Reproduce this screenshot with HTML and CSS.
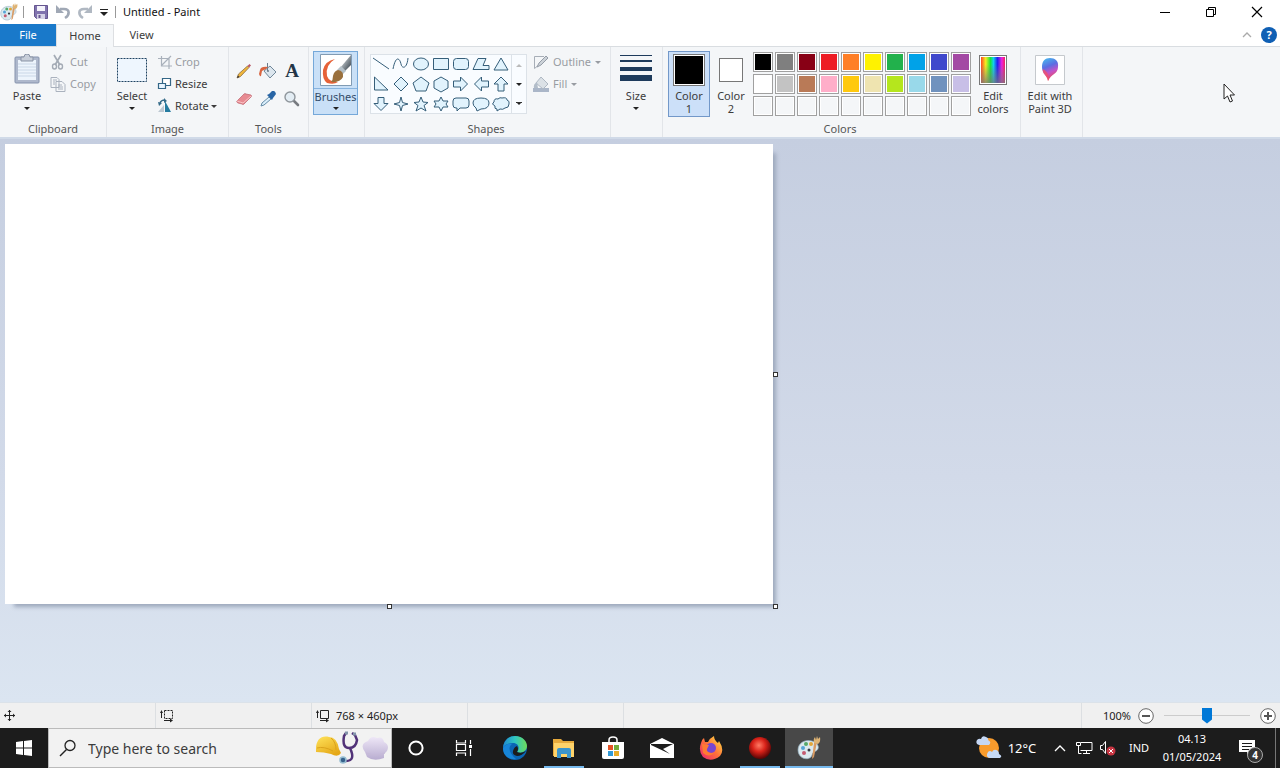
FILE: index.html
```html
<!DOCTYPE html>
<html lang="en">
<head>
<meta charset="utf-8">
<title>Untitled - Paint</title>
<link rel="stylesheet" href="styles.css">
</head>
<body>
<div class="desktop">
<header class="titlebar">
  <svg class="app-icon" width="18" height="18" viewBox="0 0 24 24"><use href="#palette"/></svg>
  <span class="rule"></span>
  <button class="quick save" aria-label="Save"><svg width="14" height="14" viewBox="0 0 14 14"><path d="M0.5 0.5h13v13h-11l-2-2z" fill="#8073ae" stroke="#65558f"/><path d="M3 1h8v5H3z" fill="#f4f3fb"/><path d="M3 9h8v5H3z" fill="#d5d2e6"/><path d="M4.500 10h2v3h-2z" fill="#65558f"/></svg></button>
  <button class="quick" aria-label="Undo"><svg width="16" height="16" viewBox="0 0 16 16"><path d="M5 5h4c6 0 6 6 1 9" fill="none" stroke="#a0a8b5" stroke-width="2.600"/><path d="M1 1v8h8z" fill="#a0a8b5"/></svg></button>
  <button class="quick" aria-label="Redo"><svg width="16" height="16" viewBox="0 0 16 16"><path d="M11 5H7C1 5 1 11 6 14" fill="none" stroke="#b0b8c2" stroke-width="2.600"/><path d="M15 1v8H7z" fill="#b0b8c2"/></svg></button>
  <button class="quick more" aria-label="Customize toolbar"><svg width="8" height="7" viewBox="0 0 8 7"><path d="M0 0h8v1H0zM0 3h8L4 7z" fill="#222"/></svg></button>
  <span class="rule"></span>
  <h1 class="title">Untitled - Paint</h1>
  <div class="window-buttons">
    <button aria-label="Minimize"><svg width="12" height="12" viewBox="0 0 12 12"><path d="M1 6.500h10" stroke="#000"/></svg></button>
    <button aria-label="Restore"><svg width="12" height="12" viewBox="0 0 12 12"><path d="M1.500 3.500h7v7h-7zM3.500 3.500v-2h7v7h-2" stroke="#000" fill="none"/></svg></button>
    <button aria-label="Close"><svg width="12" height="12" viewBox="0 0 12 12"><path d="M1 1l10 10M11 1L1 11" stroke="#000" stroke-width="1.200"/></svg></button>
  </div>
</header>
<nav class="tabs">
  <button class="tab file">File</button><button class="tab home">Home</button><button class="tab view">View</button>
  <div class="tab-end">
    <button class="plain" aria-label="Collapse ribbon"><svg width="10" height="6" viewBox="0 0 10 6"><path d="M1 5l4-4 4 4" fill="none" stroke="#aaa" stroke-width="1.300"/></svg></button>
    <button class="help" aria-label="Help">?</button>
  </div>
</nav>
<main class="ribbon">
  <section class="group clipboard">
    <div class="tools-row">
      <button class="big paste"><svg width="28" height="32" viewBox="0 0 28 32"><rect x="2" y="3" width="24" height="26" rx="1" fill="#aeb8cc" stroke="#8693ad"/><rect x="5" y="6" width="18" height="20" fill="#edf4fc"/><path d="M5 10h18M5 13h18M5 16h18M5 19h18M5 22h18" stroke="#cad7e7"/><path d="M8 3h3q0-3 3-3t3 3h3v4H8z" fill="#c7ced9" stroke="#8993a5"/></svg><span>Paste</span><i class="down"></i></button>
      <div class="stack">
        <button class="small off"><svg width="16" height="16" viewBox="0 0 16 16"><path d="M4 1l6 10M11 1L5 11" stroke="#a4abb5" stroke-width="1.700"/><ellipse cx="4.500" cy="12.500" rx="2" ry="2.500" fill="none" stroke="#a4abb5" stroke-width="1.400"/><ellipse cx="10.500" cy="12.500" rx="2" ry="2.500" fill="none" stroke="#a4abb5" stroke-width="1.400"/></svg>Cut</button>
        <button class="small off"><svg width="16" height="16" viewBox="0 0 16 16"><path d="M1 1.500h6l2 2v8H1zM6 5.500h6l3 3v7H6z" fill="#f4f6f8" stroke="#aab2be"/><path d="M3 4h4M3 6h2M3 8h2M8 9h4M8 11h5M8 13h5" stroke="#aab2be"/></svg>Copy</button>
      </div>
    </div>
    <h2>Clipboard</h2>
  </section>
  <section class="group image">
    <div class="tools-row">
      <button class="big select"><svg width="32" height="32" viewBox="0 0 32 32"><rect x="1.500" y="4.500" width="29" height="23" fill="#eef6fe" stroke="#1e4261" stroke-dasharray="2 1"/></svg><span>Select</span><i class="down"></i></button>
      <div class="stack">
        <button class="small off"><svg width="16" height="16" viewBox="0 0 16 16"><path d="M4.500 2v10H15M1 4.500h11V15M14 2L5 11" fill="none" stroke="#a9b1bb" stroke-width="1.200"/></svg>Crop</button>
        <button class="small"><svg width="16" height="16" viewBox="0 0 16 16"><path d="M5.500 2.500h8v7h-8z" fill="#fff" stroke="#346787" stroke-width="1.200"/><path d="M1.500 7.500h7v5h-7z" fill="#e8f5ff" stroke="#346787" stroke-width="1.200"/></svg>Resize</button>
        <button class="small"><svg width="16" height="16" viewBox="0 0 16 16"><path d="M8 3v11h6z" fill="#257ba0"/><path d="M7 7v7H1z" fill="#bdc8d2"/><path d="M3 5q1-3 5-3" fill="none" stroke="#356b89" stroke-width="1.500"/><path d="M7 0l3 3-3 2zM1 4l4 1-3 3z" fill="#356b89"/></svg>Rotate<i class="down"></i></button>
      </div>
    </div>
    <h2>Image</h2>
  </section>
  <section class="group tools">
    <div class="tool-grid">
      <button aria-label="Pencil"><svg width="16" height="16" viewBox="0 0 16 16"><path d="M1 15l1.500-4 9-8 1.500 1.500-8.500 9z" fill="#f0b63b" stroke="#8a6c42" stroke-width=".8"/><path d="M11.500 3l2-2L15 2.500l-2 2z" fill="#b85764"/><path d="M1 15l1-2.500 1.500 1.500z" fill="#343434"/></svg></button>
      <button aria-label="Fill with color"><svg width="18" height="16" viewBox="0 0 18 16"><path d="M5 8l6-5 6 6-6 6z" fill="#dce6ee" stroke="#71889a"/><path d="M8.500 0v8" stroke="#6b7c8b"/><path d="M9 4Q2 3 1 7l-1 4q1 3 2 2l1-5 4-2z" fill="#d96540"/><circle cx="9" cy="8" r="1" fill="#6b7c8b"/></svg></button>
      <button class="letter" aria-label="Text">A</button>
      <button aria-label="Eraser"><svg width="16" height="16" viewBox="0 0 16 16"><path d="M1 10l7-7q1-1 2 0l5 1q1 1 0 2l-7 7q-1 1-2 0l-4-1q-2-1-1-2z" fill="#e78b92" stroke="#bd626d" stroke-width=".7"/><path d="M1 10l6 2 8-7" fill="none" stroke="#fac1c4"/></svg></button>
      <button aria-label="Color picker"><svg width="16" height="16" viewBox="0 0 16 16"><path d="M1 15l1-3 7-6 2 2-7 6z" fill="#d9eefb" stroke="#668da8"/><path d="M7 4l2-1 3-3q3-1 4 3l-3 4-1 2z" fill="#2865a5"/></svg></button>
      <button aria-label="Magnifier"><svg width="16" height="16" viewBox="0 0 16 16"><path d="M9 9l5 5" stroke="#777b80" stroke-width="2.600" stroke-linecap="round"/><circle cx="6" cy="6" r="5" fill="#e3edf4" stroke="#8f969c" stroke-width="1.400"/></svg></button>
    </div>
    <h2>Tools</h2>
  </section>
  <section class="group brush-group">
    <button class="brush"><svg width="32" height="32" viewBox="0 0 32 32"><defs><linearGradient id="handle" x1="0" y1="0" x2="1" y2="1"><stop stop-color="#f4f4f4"/><stop offset=".45" stop-color="#9aa2a8"/><stop offset="1" stop-color="#25313b"/></linearGradient></defs><path d="M.5.5h31v31H.5z" fill="#fff" stroke="#819bb3"/><path d="M15 5Q5 7 3 16q-1 9 4 13 7 2 11-1-9 0-11-6Q5 11 15 5z" fill="#e66238"/><path d="M31 1L20 14l4 4 7-7z" fill="url(#handle)"/><path d="M21 12l5 5-4 4-5-5z" fill="#b4c0c8"/><path d="M18 16q6 1 5 7-3 6-12 5 2-2 2-6 1-5 5-6z" fill="#9a703d"/></svg><span>Brushes</span><i class="down"></i></button>
  </section>
  <section class="group shapes">
    <div class="tools-row">
      <div class="gallery">
        <div class="shape-grid">
          <button aria-label="Line"><svg viewBox="0 0 20 20"><path d="M2 4l16 11"/></svg></button><button aria-label="Curve"><svg viewBox="0 0 20 20"><path d="M2 15C5 0 9 5 10 10s6 5 7-6"/></svg></button><button aria-label="Oval"><svg viewBox="0 0 20 20"><ellipse cx="10" cy="10" rx="7.500" ry="6"/></svg></button><button aria-label="Rectangle"><svg viewBox="0 0 20 20"><path d="M2.500 4.500h15v11h-15z"/></svg></button><button aria-label="Rounded rectangle"><svg viewBox="0 0 20 20"><rect x="2.500" y="4.500" width="15" height="11" rx="3"/></svg></button><button aria-label="Polygon"><svg viewBox="0 0 20 20"><path d="M7 4.500h8l-3 7h6v4H2z"/></svg></button><button aria-label="Triangle"><svg viewBox="0 0 20 20"><path d="M10 4l7 12H3z"/></svg></button>
          <button aria-label="Right triangle"><svg viewBox="0 0 20 20"><path d="M3.500 3v13H17z"/></svg></button><button aria-label="Diamond"><svg viewBox="0 0 20 20"><path d="M10 3l7 7-7 7-7-7z"/></svg></button><button aria-label="Pentagon"><svg viewBox="0 0 20 20"><path d="M10 3l8 6-3 8H5L2 9z"/></svg></button><button aria-label="Hexagon"><svg viewBox="0 0 20 20"><path d="M10 3l7 4v7l-7 4-7-4V7z"/></svg></button><button aria-label="Right arrow"><svg viewBox="0 0 20 20"><path d="M2.500 7h7V3l7 7-7 7v-4h-7z"/></svg></button><button aria-label="Left arrow"><svg viewBox="0 0 20 20"><path d="M17.500 7h-7V3l-7 7 7 7v-4h7z"/></svg></button><button aria-label="Up arrow"><svg viewBox="0 0 20 20"><path d="M7 17v-7H3l7-7 7 7h-4v7z"/></svg></button>
          <button aria-label="Down arrow"><svg viewBox="0 0 20 20"><path d="M7 3.500v6H3l7 7 7-7h-4v-6z"/></svg></button><button aria-label="Four-point star"><svg viewBox="0 0 20 20"><path d="M10 3l1.500 5.500L17 10l-5.500 1.500L10 17l-1.500-5.500L3 10l5.500-1.500z"/></svg></button><button aria-label="Five-point star"><svg viewBox="0 0 20 20"><path d="M10 3l2 5 5 .5-4 3 2 5.500-5-3-5 3 2-5.500-4-3L8 8z"/></svg></button><button aria-label="Six-point star"><svg viewBox="0 0 20 20"><path d="M10 3l2 4h5l-2 3 2 3h-5l-2 4-2-4H3l2-3-2-3h5z"/></svg></button><button aria-label="Rounded callout"><svg viewBox="0 0 20 20"><path d="M5 4h10q3 0 3 3v4q0 3-3 3H9l-3 3v-3H5q-3 0-3-3V7q0-3 3-3z"/></svg></button><button aria-label="Oval callout"><svg viewBox="0 0 20 20"><path d="M5 14Q2 12 2 9q0-5 8-5t8 5q0 6-8 6l-4 2z"/></svg></button><button aria-label="Cloud callout"><svg viewBox="0 0 20 20"><path d="M6 15q-3 0-2-3-4-2-1-4 0-4 4-3 2-2 4-1 5-1 5 2 3 1 2 4 0 4-4 4-2 2-5 1l-3 2z"/></svg></button>
        </div>
        <div class="gallery-scroll"><button aria-label="Scroll up"><i class="up"></i></button><button aria-label="Scroll down"><i class="down"></i></button><button aria-label="More shapes"><i class="down lined"></i></button></div>
      </div>
      <div class="stack">
        <button class="small off"><svg width="16" height="16" viewBox="0 0 16 16"><path d="M11 2.500H1.500v12l5-4" fill="none" stroke="#a7aeb7"/><path d="M4 13l2-4 7-7 2 2-7 7z" fill="#ccd2d8" stroke="#959da8"/></svg>Outline<i class="down"></i></button>
        <button class="small off"><svg width="16" height="16" viewBox="0 0 16 16"><path d="M0 12h16v4H0z" fill="#aab6c8"/><path d="M3 7l5-6 7 7-5 5z" fill="#dbe1e6" stroke="#aeb8c3"/><path d="M4 6Q0 8 1 12h4z" fill="#b2bdc9"/></svg>Fill<i class="down"></i></button>
      </div>
    </div>
    <h2>Shapes</h2>
  </section>
  <section class="group size">
    <button class="big"><svg width="32" height="32" viewBox="0 0 32 32"><path d="M0 1h32v1H0zM0 6h32v2H0zM0 13h32v4H0zM0 21h32v6H0z" fill="#1e3b5c"/></svg><span>Size</span><i class="down"></i></button>
  </section>
  <section class="group colors">
    <div class="tools-row">
      <button class="color-choice active"><b class="chip black"></b><span>Color<br>1</span></button>
      <button class="color-choice"><b class="chip white"></b><span>Color<br>2</span></button>
      <div class="palette">
        <button class="c01" aria-label="Black"></button><button class="c02" aria-label="Gray"></button><button class="c03" aria-label="Dark red"></button><button class="c04" aria-label="Red"></button><button class="c05" aria-label="Orange"></button><button class="c06" aria-label="Yellow"></button><button class="c07" aria-label="Green"></button><button class="c08" aria-label="Turquoise"></button><button class="c09" aria-label="Indigo"></button><button class="c10" aria-label="Purple"></button>
        <button class="c11" aria-label="White"></button><button class="c12" aria-label="Light gray"></button><button class="c13" aria-label="Brown"></button><button class="c14" aria-label="Rose"></button><button class="c15" aria-label="Gold"></button><button class="c16" aria-label="Light yellow"></button><button class="c17" aria-label="Lime"></button><button class="c18" aria-label="Light turquoise"></button><button class="c19" aria-label="Blue-gray"></button><button class="c20" aria-label="Lavender"></button>
        <button aria-label="Custom 1"></button><button aria-label="Custom 2"></button><button aria-label="Custom 3"></button><button aria-label="Custom 4"></button><button aria-label="Custom 5"></button><button aria-label="Custom 6"></button><button aria-label="Custom 7"></button><button aria-label="Custom 8"></button><button aria-label="Custom 9"></button><button aria-label="Custom 10"></button>
      </div>
      <button class="picture-button"><b class="spectrum"></b><span>Edit<br>colors</span></button>
    </div>
    <h2>Colors</h2>
  </section>
  <section class="group three-d">
    <button class="picture-button"><svg width="30" height="30" viewBox="0 0 30 30"><defs><linearGradient id="drop" x1=".2" y1="0" x2=".5" y2="1"><stop stop-color="#48b8ee"/><stop offset=".38" stop-color="#5b6de2"/><stop offset=".65" stop-color="#c453c8"/><stop offset="1" stop-color="#ef4b42"/></linearGradient></defs><path d="M.5.5h29v29H.5z" fill="#fff" stroke="#c5c9cd"/><path d="M15 3c5 0 9 3 8 9 0 7-7 7-10 14 0-5-6-7-6-14 0-6 3-9 8-9z" fill="url(#drop)"/><path d="M8 14q5 2 6 10l-1 2q-1-4-3-6-3-3-2-6z" fill="#f0506b" opacity=".8"/></svg><span>Edit with<br>Paint 3D</span></button>
  </section>
</main>
<div class="workspace">
  <div class="canvas"><i class="handle east"></i><i class="handle south"></i><i class="handle corner"></i></div>
</div>
<footer class="status">
  <div class="cell"><svg width="12" height="12" viewBox="0 0 12 12"><path d="M5.500 0v11M0 5.500h11" fill="none" stroke="#222"/><path d="M3.500 2h4l-2-2zM3.500 9h4l-2 2zM2 3.500v4l-2-2zM9 3.500v4l2-2z" fill="#222"/></svg></div>
  <div class="cell"><svg width="14" height="14" viewBox="0 0 14 14"><path d="M4.500 1.500h8v8h-8z" fill="none" stroke="#222" stroke-dasharray="2 1"/><path d="M1.500 9V2M4 11.500h8" fill="none" stroke="#222"/><path d="M0 4h3L1.500 1zM10 9.500v4l3-2z" fill="#222"/></svg></div>
  <div class="cell"><svg width="14" height="14" viewBox="0 0 14 14"><path d="M4.500 1.500h8v8h-8z" fill="none" stroke="#222"/><path d="M1.500 9V2M4 11.500h8" fill="none" stroke="#222"/><path d="M0 4h3L1.500 1zM10 9.500v4l3-2z" fill="#222"/></svg><span>768 × 460px</span></div>
  <div class="cell"></div><div class="cell wide"></div>
  <div class="zoom"><label for="zoom">100%</label><button aria-label="Zoom out"><svg width="16" height="16" viewBox="0 0 16 16"><circle cx="8" cy="8" r="7.300" fill="#fff" stroke="#666"/><path d="M4 8h8" stroke="#555" stroke-width="2"/></svg></button><input id="zoom" type="range" min="0" max="100" value="50"><button aria-label="Zoom in"><svg width="16" height="16" viewBox="0 0 16 16"><circle cx="8" cy="8" r="7.300" fill="#fff" stroke="#666"/><path d="M4 8h8M8 4v8" stroke="#555" stroke-width="2"/></svg></button></div>
</footer>
<footer class="taskbar">
  <button class="task start" aria-label="Start"><svg width="16" height="16" viewBox="0 0 16 16"><path d="M0 2l7-1v6.500H0zM8 .900L16 0v7.500H8zM0 8.500h7V15l-7-1zM8 8.500h8V16l-8-1z" fill="#fff"/></svg></button>
  <div class="search">
    <svg width="18" height="18" viewBox="0 0 18 18"><circle cx="11" cy="6.500" r="5" fill="none" stroke="#222" stroke-width="1.300"/><path d="M7.500 10.500L1 17" stroke="#222" stroke-width="1.400"/></svg>
    <input type="text" aria-label="Search" placeholder="Type here to search">
    <svg width="74" height="34" viewBox="0 0 74 34"><defs><linearGradient id="hat" x1="0" y1="0" x2=".6" y2="1"><stop stop-color="#ffe35b"/><stop offset="1" stop-color="#e5a817"/></linearGradient><linearGradient id="chef" x1="0" y1="0" x2="0" y2="1"><stop stop-color="#eee7f7"/><stop offset="1" stop-color="#b8acd0"/></linearGradient></defs><path d="M1 18C1 8 7 4 14 6q8 0 10 12l2 4q-3 5-10 1-7-2-15-2z" fill="url(#hat)"/><path d="M2 17q7-2 16 3M16 7q5 4 5 12" fill="none" stroke="#dba31c"/><path d="M31 2l-2 3q-2 12 5 12t8-8l-2-5-3-2M35 17q6 13-4 13h-2" fill="none" stroke="#513278" stroke-width="2.500"/><path d="M30 2h3M38 3h3" stroke="#8294a9" stroke-width="3"/><circle cx="28" cy="29" r="3" fill="#36618b" stroke="#96bdd1" stroke-width="1.500"/><path d="M50 21q-6-8 3-11 3-6 9-3 6-2 7 4 6 3 3 9l-3 3v4q-10 4-17-1z" fill="url(#chef)"/><path d="M51 22q9 4 19 0" fill="none" stroke="#c6bad8"/></svg>
  </div>
  <button class="task" aria-label="Cortana"><svg width="18" height="18" viewBox="0 0 18 18"><circle cx="9" cy="9" r="6.600" fill="none" stroke="#fff" stroke-width="2"/></svg></button>
  <button class="task" aria-label="Task view"><svg width="18" height="16" viewBox="0 0 18 16"><path d="M1.500 0v3h9V0M1.500 16v-3h9v3M1.500 4.500h9v6h-9zM15.500 0v4M15.500 9v7" fill="none" stroke="#fff" stroke-width="1.200"/><path d="M14 5h3v3h-3z" fill="#fff"/></svg></button>
  <div class="apps">
    <button class="task" aria-label="Edge"><svg width="24" height="24" viewBox="0 0 24 24"><defs><linearGradient id="edge" x1="0" y1=".3" x2="1" y2=".3"><stop stop-color="#2089d0"/><stop offset=".5" stop-color="#30c7c1"/><stop offset="1" stop-color="#6edb59"/></linearGradient></defs><circle cx="12" cy="12" r="12" fill="#0b65b4"/><path d="M0 12C1 4 6 0 12 0c8 0 12 6 12 10 0 6-7 8-10 6 3-3 2-9-4-9C5 7 1 9 0 12z" fill="url(#edge)"/><path d="M0 12c2-3 5-5 9-4-5 4-2 10 4 15C5 24 0 19 0 12z" fill="#1785d8"/><path d="M14 10q2 3 0 6 4 2 9-1-4 5-9 5-5-1-4-5 1-4 4-5z" fill="#1c1c1c"/></svg></button>
    <button class="task running" aria-label="File Explorer"><svg width="24" height="22" viewBox="0 0 24 22"><path d="M1 2h8l2 2h11v15H1z" fill="#e7aa3c"/><path d="M2 6h20v14H2z" fill="#ffd36a"/><path d="M5 21v-8q0-2 2-2h10q2 0 2 2v8h-4v-4H9v4z" fill="#3c95cc"/></svg></button>
    <button class="task" aria-label="Store"><svg width="24" height="24" viewBox="0 0 24 24"><path d="M8 6V4q0-3 4-3t4 3v2" fill="none" stroke="#fff" stroke-width="1.500"/><path d="M1 6h22v15q0 2-2 2H3q-2 0-2-2z" fill="#fff"/><path d="M7 9h5v5H7z" fill="#e45326"/><path d="M13 9h5v5h-5z" fill="#74ad3c"/><path d="M7 15h5v5H7z" fill="#329ad6"/><path d="M13 15h5v5h-5z" fill="#e9ac27"/></svg></button>
    <button class="task" aria-label="Mail"><svg width="24" height="20" viewBox="0 0 24 20"><path d="M0 6l12-6 12 6v14H0z" fill="#fff"/><path d="M1 6h22L13 11l7 5L1 7z" fill="#1c1c1c"/></svg></button>
    <button class="task" aria-label="Firefox"><svg width="24" height="24" viewBox="0 0 24 24"><defs><linearGradient id="fox" x1="1" y1="0" x2="0" y2="1"><stop stop-color="#ffea42"/><stop offset=".5" stop-color="#ff713b"/><stop offset="1" stop-color="#e92073"/></linearGradient></defs><path d="M2 7q1-4 3-5l1 4h3q2-4 6-6 0 4 4 7l1-2q6 9 1 15-9 7-17 1-5-6-2-14z" fill="url(#fox)"/><circle cx="12" cy="12" r="5" fill="#7846d1"/><path d="M3 8q4 1 7 1l-1 2q-4 6 6 6-5 5-11 0z" fill="#ff7b32"/></svg></button>
    <button class="task running" aria-label="Recorder"><svg width="24" height="24" viewBox="0 0 24 24"><defs><radialGradient id="ball" cx=".45" cy=".38" r=".6"><stop stop-color="#ff7a64"/><stop offset=".5" stop-color="#d92219"/><stop offset="1" stop-color="#5d0505"/></radialGradient></defs><circle cx="12" cy="12" r="11" fill="url(#ball)"/></svg></button>
    <button class="task running current" aria-label="Paint"><svg width="24" height="24" viewBox="0 0 24 24"><g id="palette"><path d="M1 14C1 7 8 3 15 5c7 2 8 8 4 10-4 1-3 3-5 6-4 4-13 1-13-7z" fill="#dbe9ef" stroke="#91adbd" stroke-width=".7"/><circle cx="6" cy="12" r="2" fill="#55a4d7"/><circle cx="9" cy="8" r="2" fill="#54a96b"/><circle cx="14" cy="8" r="2" fill="#e2a63a"/><circle cx="7" cy="17" r="2" fill="#c45b71"/><circle cx="12" cy="14" r="1.500" fill="#343b43"/><path d="M20 6l-3 15-2 2 2-16z" fill="#d89b65"/><path d="M17 7q-1-4 1-6l1 3 1-4 1 3 2-2q1 5-2 7z" fill="#dfb475"/></g></svg></button>
  </div>
  <div class="tray">
    <button class="weather"><svg width="26" height="26" viewBox="0 0 26 26"><circle cx="13" cy="13" r="10" fill="#f89b2c"/><path d="M3 10q-4-1-2-5 2-2 4-1 1-4 5-2 3 1 2 3 4 2 1 5z" fill="#c5d7f4"/><path d="M14 23q-5-1-2-6 2-2 4 0 2-4 6-1 1 1 1 3 4 2 1 4z" fill="#c5d9f6"/></svg><span>12°C</span></button>
    <button class="hidden-icons" aria-label="Show hidden icons"><svg width="12" height="8" viewBox="0 0 12 8"><path d="M1 7l5-5 5 5" fill="none" stroke="#fff" stroke-width="1.300"/></svg></button>
    <button aria-label="Network"><svg width="17" height="16" viewBox="0 0 17 16"><path d="M5 2.500h11v8H4.500M10.500 11v2.500M7 13.500h7M.5 2.500h4v3h-4zM2.500 6v7.500h3" fill="none" stroke="#fff"/></svg></button>
    <button aria-label="Muted"><svg width="18" height="16" viewBox="0 0 18 16"><path d="M1.500 5.500h2l3-4v12l-3-4h-2z" fill="none" stroke="#fff"/><circle cx="12" cy="11" r="4.500" fill="#c73542"/><path d="M10 9l4 4M14 9l-4 4" stroke="#fff"/></svg></button>
    <button class="language">IND</button>
    <button class="clock"><span>04.13</span><span>01/05/2024</span></button>
    <button class="notes" aria-label="4 notifications"><svg width="18" height="16" viewBox="0 0 18 16"><path d="M0 0h16v12h-5l-3 3v-3H0z" fill="#fff"/><path d="M3 3.500h10M3 6.500h10M3 9.500h7" stroke="#1c1c1c"/></svg><b>4</b></button>
    <span class="show-desktop"></span>
  </div>
</footer>
<svg class="pointer" width="13" height="20" viewBox="0 0 13 20"><path d="M1 1v15l3.500-3 2.500 6 2.500-1-2.500-6h4.500z" fill="#fff" stroke="#222"/></svg>
</div>
</body>
</html>
```
FILE: styles.css
```css
* { box-sizing: border-box; }
body { margin: 0; font: 11px/14px "Noto Sans", "Open Sans", sans-serif; color: #3c3c3c; }
button { font: inherit; color: inherit; padding: 0; border: 0; background: none; display: flex; align-items: center; justify-content: center; }
svg { flex: none; display: block; }
h1, h2 { margin: 0; font: inherit; }
.desktop { position: relative; min-height: 100vh; display: flex; flex-direction: column; overflow: hidden; }

.titlebar { height: 24px; display: flex; align-items: center; background: #fff; }
.app-icon { margin-right: 5px; }
.rule { width: 1px; height: 12px; background: #999; }
.quick { width: 22px; height: 22px; }
.save { margin-left: 6px; }
.more { width: 16px; margin-right: 3px; }
.title { color: #111; margin-left: 7px; }
.window-buttons { margin-left: auto; display: flex; height: 22px; }
.window-buttons button { width: 46px; }

.tabs { height: 23px; display: flex; background: #fff; border-bottom: 1px solid #d9dde1; }
.tab { height: 22px; }
.file { width: 56px; background: #1979ca; color: #fff; }
.home { width: 58px; height: 23px; background: #f5f7f9; border: 1px solid #dddfe2; border-bottom: 0; }
.view { width: 55px; }
.tab-end { margin-left: auto; display: flex; align-items: center; gap: 9px; padding-right: 3px; }
.help { width: 16px; height: 16px; border-radius: 50%; background: #0f5fb4; color: #fff; font-weight: bold; }

.ribbon { height: 92px; display: flex; background: #f4f6f8; border-bottom: 2px solid #d0dae8; }
.group { flex: none; display: flex; flex-direction: column; align-items: flex-start; padding-top: 4px; border-right: 1px solid #e2e5e9; }
.group h2 { margin-top: auto; width: 100%; line-height: 17px; text-align: center; color: #555; }
.tools-row, .gallery { display: flex; align-items: flex-start; }
.clipboard { width: 107px; }
.image { width: 122px; }
.tools { width: 80px; }
.brush-group { width: 56px; padding-left: 4px; }
.shapes { width: 246px; padding-left: 5px; }
.shapes h2, .colors h2 { padding-right: 8px; }
.size { width: 52px; padding-left: 3px; }
.colors { width: 358px; padding-left: 5px; }
.three-d { width: 62px; padding-left: 3px; }
.big { flex-direction: column; width: 44px; padding-top: 3px; }
.paste { margin: 0 5px; }
.select { margin: 0 3px; }
.big span { margin-top: 3px; line-height: 14px; }
.big .down { margin-top: 4px; }
.down { width: 0; height: 0; border: 3px solid transparent; border-top-color: currentColor; border-bottom: 0; }
.big .down, .gallery .down { color: #222; }
.up { width: 0; height: 0; border: 3px solid transparent; border-bottom-color: #bbb; border-top: 0; }
.stack { display: flex; flex-direction: column; align-items: flex-start; }
.clipboard .stack { margin-left: -4px; }
.small { height: 22px; gap: 3px; white-space: nowrap; }
.clipboard .small { gap: 4px; }
.image .small { gap: 2px; }
.off { color: #989ca2; }
.tool-grid { display: grid; grid-template-columns: repeat(3, 24px); grid-auto-rows: 28px; padding: 6px 0 0 3px; }
.letter { font: bold 19px "Liberation Serif", serif; color: #233547; }
.brush { flex-direction: column; width: 45px; height: 64px; padding-top: 2px; border: 1px solid #75a8d9; background: #c9e0f7; color: #334b68; justify-content: flex-start; }
.brush span { width: 100%; margin-top: 2px; border-top: 1px solid #88b4df; line-height: 15px; }
.brush .down { margin-top: 3px; color: #222; }

.gallery { height: 60px; margin-top: 3px; border: 1px solid #dce2e8; background: #f9fcff; }
.shape-grid { display: grid; grid-template-columns: repeat(7, 20px); grid-auto-rows: 20px; margin-top: -1px; }
.shape-grid svg { width: 20px; height: 20px; fill: #e1f3fd; stroke: #355e79; }
.shape-grid button:first-child svg, .shape-grid button:nth-child(2) svg { fill: none; }
.gallery-scroll { display: grid; grid-template-rows: 20px 19px 19px; width: 15px; border-left: 1px solid #dce2e8; }
.lined { position: relative; }
.lined::before { content: ""; position: absolute; left: -3px; top: -3px; width: 6px; height: 1px; background: #333; }
.shapes .stack { margin-left: 6px; }
.shapes .small { gap: 4px; }

.color-choice { flex-direction: column; justify-content: flex-start; width: 42px; height: 66px; line-height: 13px; border: 1px solid transparent; }
.active { border-color: #7298c9; background: #cce0f9; }
.chip { margin: 2px 0 3px; width: 32px; height: 32px; border: 1px solid #777; background: #000; box-shadow: inset 0 0 0 1px #fff; }
.white { margin: 6px 0 7px; width: 24px; height: 24px; background: #fff; }
.palette { display: grid; grid-template-columns: repeat(10, 20px); grid-auto-rows: 20px; gap: 2px; margin: 1px 0 0 1px; }
.palette button { border: 1px solid #a0a0a0; box-shadow: inset 0 0 0 1px #fff; }
.c01 { background: #000; } .c02 { background: #7f7f7f; } .c03 { background: #880015; } .c04 { background: #ed1c24; } .c05 { background: #ff7f27; }
.c06 { background: #fff200; } .c07 { background: #22b14c; } .c08 { background: #00a2e8; } .c09 { background: #3f48cc; } .c10 { background: #a349a4; }
.c11 { background: #fff; } .c12 { background: #c3c3c3; } .c13 { background: #b97a57; } .c14 { background: #ffaec9; } .c15 { background: #ffc90e; }
.c16 { background: #efe4b0; } .c17 { background: #b5e61d; } .c18 { background: #99d9ea; } .c19 { background: #7092be; } .c20 { background: #c8bfe7; }
.picture-button { width: 44px; flex-direction: column; line-height: 13px; white-space: nowrap; padding-top: 4px; }
.picture-button span { margin-top: 4px; }
.spectrum { width: 28px; height: 30px; border: 1px solid #777; box-shadow: inset 0 0 0 1px #fff; background: linear-gradient(transparent 30%, #777c), linear-gradient(90deg, #f22, #f5ee22 22%, #18e538 40%, #10d0ef 52%, #2020f0 67%, #ef22dd 84%, #f02035); }
.three-d .picture-button { width: 52px; }

.workspace { flex: 1; padding: 5px; background: linear-gradient(#c5cee0, #d2dae9 60%, #dbe5f1); }
.canvas { position: relative; width: 768px; height: 460px; background: #fff; box-shadow: 6px 6px 4px -3px #9ea9bd; }
.handle { position: absolute; width: 5px; height: 5px; border: 1px solid #333; background: #fff; }
.east { right: -5px; top: 228px; }
.south { left: 382px; bottom: -5px; }
.corner { right: -5px; bottom: -5px; }

.status { height: 26px; display: flex; background: #f0f0f0; border-top: 1px solid #dbe2e9; color: #222; }
.cell { width: 156px; padding: 0 5px 0 4px; display: flex; align-items: center; gap: 6px; border-right: 1px solid #dcdfe2; }
.wide { flex: 1; }
.zoom { width: 198px; display: flex; align-items: center; justify-content: flex-end; padding-right: 4px; }
.zoom label { margin-right: 7px; }
.zoom input { appearance: none; width: 86px; height: 18px; margin: 0 10px; background: linear-gradient(#ccc, #ccc) center / 100% 1px no-repeat; }
.zoom input::-webkit-slider-thumb { appearance: none; width: 10px; height: 16px; background: #0078d7; clip-path: polygon(0 0, 100% 0, 100% 75%, 50% 100%, 0 75%); }

.taskbar { height: 40px; display: flex; background: #1c1c1c; color: #fff; overflow: hidden; }
.task { position: relative; width: 48px; height: 40px; }
.search { display: flex; align-items: center; width: 344px; padding: 0 2px 0 10px; background: #f2f2f2; border: 1px solid #bbb; }
.search input { flex: 1; min-width: 0; border: 0; outline: 0; padding: 0 0 0 11px; background: none; font: 14px "Noto Sans", "Open Sans", sans-serif; color: #333; }
.search input::placeholder { color: #3c3c3c; opacity: 1; }
.apps { display: flex; gap: 1px; margin-left: 3px; }
.running::after { content: ""; position: absolute; left: 4px; right: 4px; bottom: 0; height: 2px; background: #76b9ed; }
.current { background: #484848; }
.current::after { left: 0; right: 0; }
.tray { margin-left: auto; display: flex; align-items: center; }
.tray button { height: 40px; width: 24px; }
.tray .weather { width: 64px; gap: 6px; font-size: 13px; margin-right: 10px; }
.tray .language { width: 38px; }
.tray .clock { width: 68px; flex-direction: column; line-height: 18px; }
.tray .notes { position: relative; width: 44px; margin-right: 5px; }
.notes b { position: absolute; left: 21px; top: 19px; width: 16px; height: 16px; border: 1px solid #aaa; border-radius: 50%; background: #333; font-size: 10px; line-height: 14px; }
.show-desktop { width: 5px; height: 40px; border-left: 1px solid #777; }
.pointer { position: absolute; left: 1223px; top: 83px; }
```
